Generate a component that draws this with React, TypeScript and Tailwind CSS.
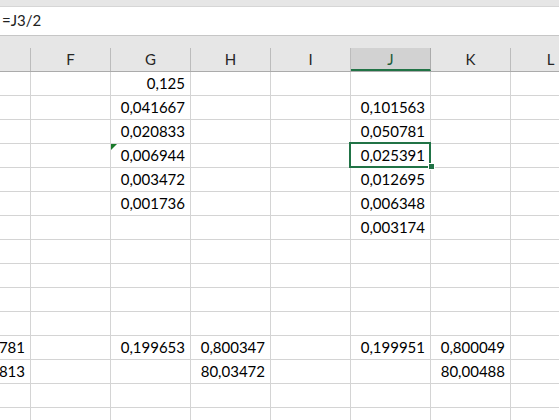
import type { ReactNode } from 'react';

const columns = ['E', 'F', 'G', 'H', 'I', 'J', 'K', 'L'];

// values keyed by column letter, one entry per visible row
const rows: Record<string, string>[] = [
  { G: '0,125' },
  { G: '0,041667', J: '0,101563' },
  { G: '0,020833', J: '0,050781' },
  { G: '0,006944', J: '0,025391' },
  { G: '0,003472', J: '0,012695' },
  { G: '0,001736', J: '0,006348' },
  { J: '0,003174' },
  {},
  {},
  {},
  {},
  { E: '781', G: '0,199653', H: '0,800347', J: '0,199951', K: '0,800049' },
  { E: '813', H: '80,03472', K: '80,00488' },
  {},
  {},
];

const Cell = ({ children, extra }: { children?: ReactNode; extra?: ReactNode }) => (
  <div className="relative h-[24px] border-r border-b border-[#d4d4d4] flex items-center justify-end pr-[5px] overflow-visible">
    {extra}
    <span className="whitespace-nowrap leading-[23px]">{children}</span>
  </div>
);

export default function App() {
  return (
    <div className="w-[559px] h-[420px] overflow-hidden bg-white text-[15px] text-black font-['Lato','Liberation_Sans',sans-serif]">
      <div className="h-[7px] bg-[#e6e6e6] border-b border-[#d6d6d6]" />
      <div className="h-[29px] bg-white border-b border-[#c6c6c6] pl-[2px] leading-[27px] text-[#222]">=J3/2</div>

      <div className="h-[36px] bg-[#e6e6e6] pt-[12px]">
        <div className="grid grid-cols-[31px_repeat(7,80px)] border-b border-[#ababab]">
          {columns.map((c) =>
            c === 'J' ? (
              <div
                key={c}
                className="h-[23px] bg-[#d2d2d2] border-r border-[#ababab] border-b-2 border-b-[#217346] -mb-px text-center leading-[22px] text-[#1d5c39]"
              >
                {c}
              </div>
            ) : (
              <div key={c} className="h-[23px] border-r border-[#bcbcbc] text-center leading-[23px] text-[#262626]">
                {c === 'E' ? '' : c}
              </div>
            ),
          )}
        </div>
      </div>

      <div className="flex flex-col overflow-hidden">
        {rows.map((r, i) => (
          <div key={i} className="grid grid-cols-[31px_repeat(7,80px)]">
            {columns.map((c) => {
              let extra: ReactNode = null;
              if (i === 3 && c === 'G') {
                extra = (
                  <span className="absolute left-0 top-0 w-0 h-0 border-t-[6px] border-r-[6px] border-t-[#1a7a2a] border-r-transparent" />
                );
              }
              if (i === 3 && c === 'J') {
                extra = (
                  <>
                    <span className="absolute -left-[2px] -top-[2px] w-[82px] h-[26px] border-2 border-[#217346] z-10" />
                    <span className="absolute left-[77px] top-[19px] w-[7px] h-[7px] bg-[#217346] border border-white z-20" />
                  </>
                );
              }
              return (
                <Cell key={c} extra={extra}>
                  {r[c]}
                </Cell>
              );
            })}
          </div>
        ))}
      </div>
    </div>
  );
}
